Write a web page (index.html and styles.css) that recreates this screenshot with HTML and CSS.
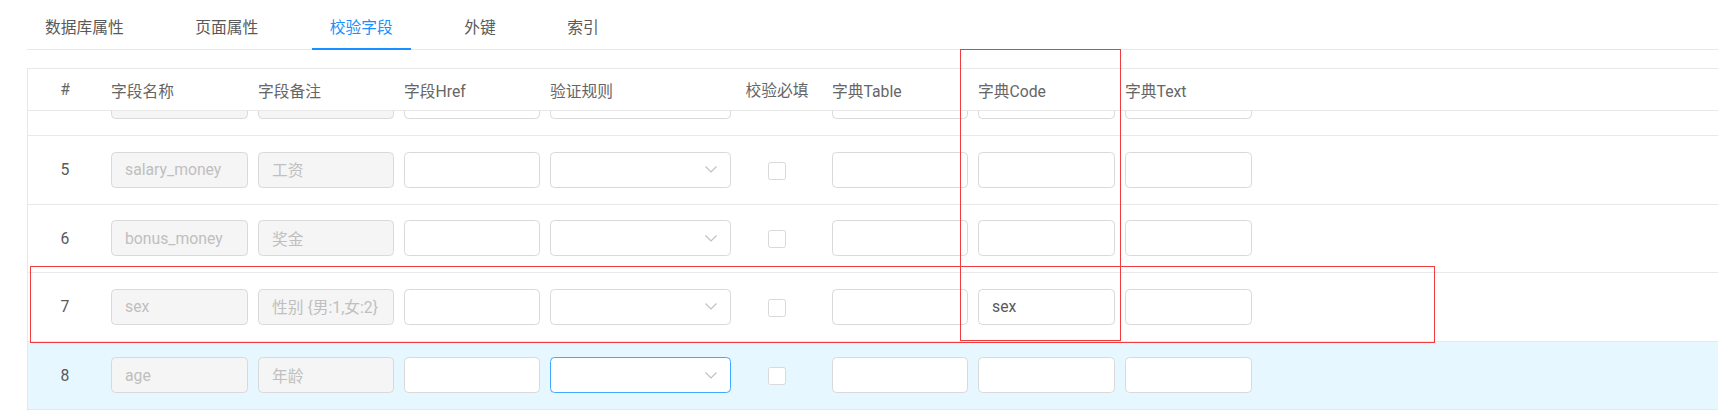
FILE: index.html
```html
<!DOCTYPE html>
<html lang="zh-CN">
<head>
    <meta charset="UTF-8">
    <meta name="viewport" content="width=device-width, initial-scale=1.0">
    <title>校验字段</title>
    <link rel="stylesheet" href="styles.css">
</head>
<body>
    <div class="page">
        <div class="tabs">
            <div class="tab">数据库属性</div>
            <div class="tab">页面属性</div>
            <div class="tab active">校验字段</div>
            <div class="tab">外键</div>
            <div class="tab">索引</div>
        </div>

        <div class="table-card">
            <table class="table-head">
                <colgroup>
                    <col class="w-index"><col class="w-name"><col class="w-remark"><col class="w-href">
                    <col class="w-rule"><col class="w-check"><col class="w-dict"><col class="w-code">
                    <col class="w-text"><col>
                </colgroup>
                <tr>
                    <th class="col-index">#</th>
                    <th>字段名称</th>
                    <th>字段备注</th>
                    <th>字段Href</th>
                    <th>验证规则</th>
                    <th class="col-check">校验必填</th>
                    <th>字典Table</th>
                    <th>字典Code</th>
                    <th>字典Text</th>
                    <th></th>
                </tr>
            </table>

            <div class="table-body">
                <table>
                    <colgroup>
                        <col class="w-index"><col class="w-name"><col class="w-remark"><col class="w-href">
                        <col class="w-rule"><col class="w-check"><col class="w-dict"><col class="w-code">
                        <col class="w-text"><col>
                    </colgroup>
                    <!-- row 4 is scrolled mostly out of view -->
                    <tr>
                        <td class="col-index"></td>
                        <td><input class="field" disabled></td>
                        <td><input class="field" disabled></td>
                        <td><input class="field"></td>
                        <td><div class="select"></div></td>
                        <td class="col-check"></td>
                        <td><input class="field"></td>
                        <td><input class="field"></td>
                        <td><input class="field"></td>
                        <td></td>
                    </tr>
                    <tr>
                        <td class="col-index">5</td>
                        <td><input class="field" disabled value="salary_money"></td>
                        <td><input class="field" disabled value="工资"></td>
                        <td><input class="field"></td>
                        <td><div class="select"><svg width="12" height="7" viewBox="0 0 12 7"><polyline points="0.5,0.5 6,6 11.5,0.5" fill="none" stroke="#bfbfbf" stroke-width="1.1"/></svg></div></td>
                        <td class="col-check"><span class="checkbox"></span></td>
                        <td><input class="field"></td>
                        <td><input class="field"></td>
                        <td><input class="field"></td>
                        <td></td>
                    </tr>
                    <tr>
                        <td class="col-index">6</td>
                        <td><input class="field" disabled value="bonus_money"></td>
                        <td><input class="field" disabled value="奖金"></td>
                        <td><input class="field"></td>
                        <td><div class="select"><svg width="12" height="7" viewBox="0 0 12 7"><polyline points="0.5,0.5 6,6 11.5,0.5" fill="none" stroke="#bfbfbf" stroke-width="1.1"/></svg></div></td>
                        <td class="col-check"><span class="checkbox"></span></td>
                        <td><input class="field"></td>
                        <td><input class="field"></td>
                        <td><input class="field"></td>
                        <td></td>
                    </tr>
                    <tr>
                        <td class="col-index">7</td>
                        <td><input class="field" disabled value="sex"></td>
                        <td><input class="field" disabled value="性别 {男:1,女:2}"></td>
                        <td><input class="field"></td>
                        <td><div class="select"><svg width="12" height="7" viewBox="0 0 12 7"><polyline points="0.5,0.5 6,6 11.5,0.5" fill="none" stroke="#bfbfbf" stroke-width="1.1"/></svg></div></td>
                        <td class="col-check"><span class="checkbox"></span></td>
                        <td><input class="field"></td>
                        <td><input class="field" value="sex"></td>
                        <td><input class="field"></td>
                        <td></td>
                    </tr>
                    <tr class="hover">
                        <td class="col-index">8</td>
                        <td><input class="field" disabled value="age"></td>
                        <td><input class="field" disabled value="年龄"></td>
                        <td><input class="field"></td>
                        <td><div class="select focused"><svg width="12" height="7" viewBox="0 0 12 7"><polyline points="0.5,0.5 6,6 11.5,0.5" fill="none" stroke="#bfbfbf" stroke-width="1.1"/></svg></div></td>
                        <td class="col-check"><span class="checkbox"></span></td>
                        <td><input class="field"></td>
                        <td><input class="field"></td>
                        <td><input class="field"></td>
                        <td></td>
                    </tr>
                </table>
            </div>
        </div>

        <!-- screenshot annotations -->
        <div class="mark mark-code"></div>
        <div class="mark mark-row"></div>
    </div>
</body>
</html>
```

FILE: styles.css
```css
body {
    margin: 0;
    padding: 0;
    background-color: #ffffff;
    font-family: Roboto, "Noto Sans CJK SC", sans-serif;
    font-size: 15.75px;
    color: #595959;
    overflow: hidden;
}

.page {
    position: relative;
    padding-left: 27px;
    height: 411px;
    overflow: hidden;
}

/* tabs */
.tabs {
    display: flex;
    height: 49px;
    border-bottom: 1px solid #e8e8e8;
    margin-bottom: 18px;
}

.tab {
    position: relative;
    padding: 16px 18px 9px;
    margin-right: 35.5px;
    line-height: 24px;
    color: #595959;
    white-space: nowrap;
}

.tab.active {
    color: #1890ff;
}

.tab.active::after {
    content: "";
    position: absolute;
    left: 0;
    right: 0;
    bottom: -1px;
    height: 2px;
    background-color: #1890ff;
}

/* table */
.table-card {
    width: calc(100% + 40px);
    border-top: 1px solid #e8e8e8;
    border-left: 1px solid #e8e8e8;
}

.table-card table {
    width: 100%;
    table-layout: fixed;
    border-collapse: separate;
    border-spacing: 0;
}

.w-index { width: 78px; }
.w-name { width: 147px; }
.w-remark { width: 146px; }
.w-href { width: 146px; }
.w-rule { width: 191px; }
.w-check { width: 91px; }
.w-dict { width: 146px; }
.w-code { width: 147px; }
.w-text { width: 137px; }

.table-head th {
    height: 39px;
    padding: 2px 5px 0;
    font-weight: normal;
    text-align: left;
    color: #666666;
    border-bottom: 1px solid #e8e8e8;
    white-space: nowrap;
}

.table-body {
    height: 300px;
    overflow: hidden;
}

.table-body table {
    margin-top: -43.5px;
}

.table-body td {
    height: 67.5px;
    padding: 0 5px;
    border-bottom: 1px solid #e8e8e8;
    vertical-align: middle;
}

.table-body tr.hover td {
    background-color: #e6f7ff;
}

.table-card .col-index {
    text-align: center;
    padding: 0 4px 0 0;
}

.table-card .col-check {
    text-align: center;
    padding: 0 9px 0 0;
}

.field {
    display: block;
    box-sizing: border-box;
    width: 100%;
    height: 36px;
    padding: 0 13px;
    border: 1px solid #d9d9d9;
    border-radius: 4.5px;
    background-color: #ffffff;
    font: inherit;
    color: #595959;
    outline: none;
}

.field:disabled {
    background-color: #f5f5f5;
    color: #bfbfbf;
    -webkit-text-fill-color: #bfbfbf;
}

.select {
    box-sizing: border-box;
    height: 36px;
    border: 1px solid #d9d9d9;
    border-radius: 4.5px;
    background-color: #ffffff;
    display: flex;
    align-items: center;
    justify-content: flex-end;
    padding-right: 13px;
}

.select.focused {
    border-color: #40a9ff;
}

.checkbox {
    display: inline-block;
    box-sizing: border-box;
    width: 18px;
    height: 18px;
    border: 1px solid #d9d9d9;
    border-radius: 2.5px;
    background-color: #ffffff;
    vertical-align: middle;
}

/* red annotation boxes drawn over the screenshot */
.mark {
    position: absolute;
    box-sizing: border-box;
    border: 1px solid #f03c3c;
    pointer-events: none;
}

.mark-code {
    left: 960px;
    top: 49px;
    width: 161px;
    height: 292px;
}

.mark-row {
    left: 30px;
    top: 265.5px;
    width: 1405px;
    height: 77px;
}
```
